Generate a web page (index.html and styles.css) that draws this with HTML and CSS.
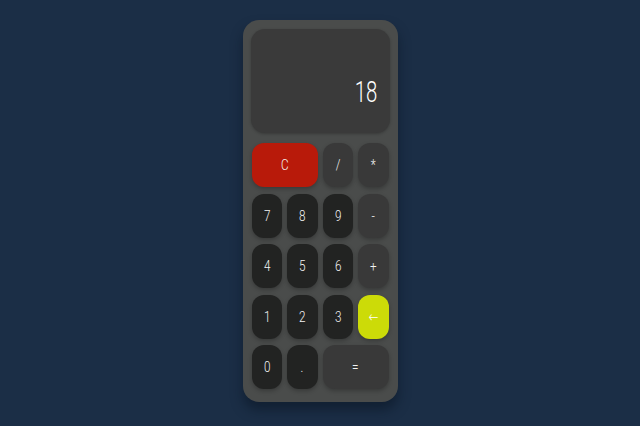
FILE: index.html
```html
<!DOCTYPE html>
<html>
<head>
<meta charset="utf-8">
<link rel="stylesheet" href="styles.css">
</head>
<body>
<div class="calc">
  <div class="display"><span class="value">18</span></div>
  <div class="keys">
    <button class="key clear wide"><span class="lbl">C</span></button>
    <button class="key op"><span class="lbl">/</span></button>
    <button class="key op"><span class="lbl">*</span></button>
    <button class="key"><span class="lbl">7</span></button>
    <button class="key"><span class="lbl">8</span></button>
    <button class="key"><span class="lbl">9</span></button>
    <button class="key op"><span class="lbl">-</span></button>
    <button class="key"><span class="lbl">4</span></button>
    <button class="key"><span class="lbl">5</span></button>
    <button class="key"><span class="lbl">6</span></button>
    <button class="key op"><span class="lbl">+</span></button>
    <button class="key"><span class="lbl">1</span></button>
    <button class="key"><span class="lbl">2</span></button>
    <button class="key"><span class="lbl">3</span></button>
    <button class="key back"><span class="lbl">&larr;</span></button>
    <button class="key"><span class="lbl">0</span></button>
    <button class="key"><span class="lbl">.</span></button>
    <button class="key op wide"><span class="lbl">=</span></button>
  </div>
</div>
</body>
</html>
```

FILE: styles.css
```css
* { box-sizing: border-box; }
html, body { margin: 0; height: 100%; }
body {
  background: #1b2e46;
  display: flex;
  justify-content: center;
  align-items: center;
  font-family: Roboto, "DejaVu Sans", sans-serif;
}
.calc {
  width: 155px;
  background: #4a4c4b;
  border-radius: 16px;
  padding: 9px 8px 13px 8px;
  box-shadow: 0 8px 12px rgba(10, 20, 35, 0.55);
  margin-top: -4px;
}
.display {
  height: 104px;
  background: #3a3a3a;
  border-radius: 14px;
  display: flex;
  justify-content: flex-end;
  align-items: flex-end;
  padding: 0 12px 26px 0;
  box-shadow: 0 1px 3px rgba(0,0,0,0.25);
}
.value {
  color: #ffffff;
  font-size: 29px;
  font-weight: 300;
  display: inline-block;
  transform: scaleX(0.7);
  transform-origin: right center;
  line-height: 1;
}
.keys {
  margin-top: 10px;
  display: grid;
  grid-template-columns: repeat(4, 1fr);
  grid-auto-rows: 44px;
  column-gap: 5px;
  row-gap: 6.5px;
  padding: 0 1px;
}
.key {
  border: none;
  border-radius: 12px;
  background: #222322;
  color: #f4f4f4;
  font-family: Roboto, "DejaVu Sans", sans-serif;
  font-weight: 300;
  font-size: 15px;
  padding: 0;
  box-shadow: 0 2px 4px rgba(0,0,0,0.25);
}
.lbl {
  display: inline-block;
  transform: scaleX(0.78);
}
.key.op { background: #393939; }
.key.wide { grid-column: span 2; }
.key.clear { background: #b81a0a; }
.key.back { background: #ccdb08; color: #ffffff; }
```
